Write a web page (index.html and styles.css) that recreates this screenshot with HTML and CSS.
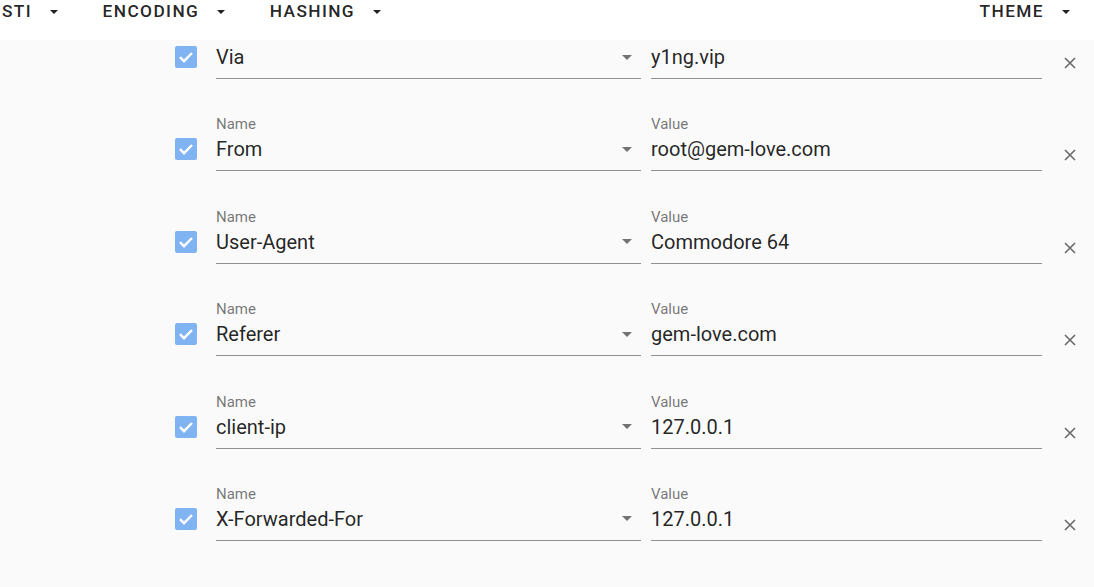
FILE: index.html
```html
<!DOCTYPE html>
<html>
<head>
<meta charset="utf-8">
<link rel="stylesheet" href="styles.css">
</head>
<body>
<header class="bar">
  <div class="menu">
    <span class="btn">STI<i class="caret"></i></span>
    <span class="btn">ENCODING<i class="caret"></i></span>
    <span class="btn">HASHING<i class="caret"></i></span>
  </div>
  <span class="btn">THEME<i class="caret"></i></span>
</header>
<main class="list">
  <div class="row">
    <span class="check"><svg viewBox="0 0 22 22"><path d="M5 11.2 l4 4 l8 -8.2" fill="none" stroke="#fff" stroke-width="2.4"/></svg></span>
    <div class="field name"><label>Name</label><div class="input"><span>Via</span><i class="drop"></i></div></div>
    <div class="field value"><label>Value</label><div class="input"><span>y1ng.vip</span></div></div>
    <span class="close"><svg viewBox="0 0 12 12"><path d="M1 1 L11 11 M11 1 L1 11" stroke="currentColor" stroke-width="1.6"/></svg></span>
  </div>
  <div class="row">
    <span class="check"><svg viewBox="0 0 22 22"><path d="M5 11.2 l4 4 l8 -8.2" fill="none" stroke="#fff" stroke-width="2.4"/></svg></span>
    <div class="field name"><label>Name</label><div class="input"><span>From</span><i class="drop"></i></div></div>
    <div class="field value"><label>Value</label><div class="input"><span>root@gem-love.com</span></div></div>
    <span class="close"><svg viewBox="0 0 12 12"><path d="M1 1 L11 11 M11 1 L1 11" stroke="currentColor" stroke-width="1.6"/></svg></span>
  </div>
  <div class="row">
    <span class="check"><svg viewBox="0 0 22 22"><path d="M5 11.2 l4 4 l8 -8.2" fill="none" stroke="#fff" stroke-width="2.4"/></svg></span>
    <div class="field name"><label>Name</label><div class="input"><span>User-Agent</span><i class="drop"></i></div></div>
    <div class="field value"><label>Value</label><div class="input"><span>Commodore 64</span></div></div>
    <span class="close"><svg viewBox="0 0 12 12"><path d="M1 1 L11 11 M11 1 L1 11" stroke="currentColor" stroke-width="1.6"/></svg></span>
  </div>
  <div class="row">
    <span class="check"><svg viewBox="0 0 22 22"><path d="M5 11.2 l4 4 l8 -8.2" fill="none" stroke="#fff" stroke-width="2.4"/></svg></span>
    <div class="field name"><label>Name</label><div class="input"><span>Referer</span><i class="drop"></i></div></div>
    <div class="field value"><label>Value</label><div class="input"><span>gem-love.com</span></div></div>
    <span class="close"><svg viewBox="0 0 12 12"><path d="M1 1 L11 11 M11 1 L1 11" stroke="currentColor" stroke-width="1.6"/></svg></span>
  </div>
  <div class="row">
    <span class="check"><svg viewBox="0 0 22 22"><path d="M5 11.2 l4 4 l8 -8.2" fill="none" stroke="#fff" stroke-width="2.4"/></svg></span>
    <div class="field name"><label>Name</label><div class="input"><span>client-ip</span><i class="drop"></i></div></div>
    <div class="field value"><label>Value</label><div class="input"><span>127.0.0.1</span></div></div>
    <span class="close"><svg viewBox="0 0 12 12"><path d="M1 1 L11 11 M11 1 L1 11" stroke="currentColor" stroke-width="1.6"/></svg></span>
  </div>
  <div class="row">
    <span class="check"><svg viewBox="0 0 22 22"><path d="M5 11.2 l4 4 l8 -8.2" fill="none" stroke="#fff" stroke-width="2.4"/></svg></span>
    <div class="field name"><label>Name</label><div class="input"><span>X-Forwarded-For</span><i class="drop"></i></div></div>
    <div class="field value"><label>Value</label><div class="input"><span>127.0.0.1</span></div></div>
    <span class="close"><svg viewBox="0 0 12 12"><path d="M1 1 L11 11 M11 1 L1 11" stroke="currentColor" stroke-width="1.6"/></svg></span>
  </div>
</main>
</body>
</html>
```

FILE: styles.css
```css
html, body {
  margin: 0;
  padding: 0;
  background: #fafafa;
  font-family: Roboto, "Liberation Sans", sans-serif;
  color: rgba(0,0,0,.87);
  overflow: hidden;
}
.bar {
  position: fixed;
  top: 0;
  left: 0;
  right: 0;
  height: 40px;
  background: #fff;
  display: flex;
  justify-content: space-between;
  align-items: flex-start;
  padding: 0 24px 0 2px;
  z-index: 2;
}
.menu {
  display: flex;
  gap: 44.5px;
}
.btn {
  display: flex;
  align-items: center;
  gap: 18px;
  height: 22px;
  font-size: 17.3px;
  font-weight: 500;
  letter-spacing: 1.4px;
  text-transform: uppercase;
  color: rgba(0,0,0,.87);
}
.caret {
  display: block;
  width: 0;
  height: 0;
  border-left: 4px solid transparent;
  border-right: 4px solid transparent;
  border-top: 4px solid rgba(0,0,0,.87);
  margin-top: 1px;
}
.list {
  padding: 23px 0 0 175px;
}
.row {
  display: flex;
  align-items: flex-end;
  margin-bottom: 36.4px;
  height: 56px;
}
.check {
  width: 22px;
  height: 22px;
  background: #80b3f2;
  border-radius: 2px;
  margin-bottom: 11px;
  margin-right: 19px;
  display: block;
}
.check svg { display: block; width: 22px; height: 22px; }
.field {
  display: flex;
  flex-direction: column;
}
.field.name { width: 425px; margin-right: 10px; }
.field.value { width: 391px; }
.field label {
  font-size: 15px;
  line-height: 18px;
  color: rgba(0,0,0,.55);
  margin-bottom: 4px;
}
.input {
  display: flex;
  align-items: center;
  justify-content: space-between;
  font-size: 20px;
  line-height: 24px;
  padding-bottom: 9px;
  border-bottom: 1px solid rgba(0,0,0,.42);
}
.drop {
  display: block;
  width: 0;
  height: 0;
  border-left: 5px solid transparent;
  border-right: 5px solid transparent;
  border-top: 5px solid rgba(0,0,0,.54);
  margin-right: 9px;
}
.close {
  display: block;
  width: 12px;
  height: 12px;
  margin-left: 22px;
  margin-bottom: 10px;
  color: rgba(0,0,0,.58);
}
.close svg { display: block; width: 12px; height: 12px; }
```
